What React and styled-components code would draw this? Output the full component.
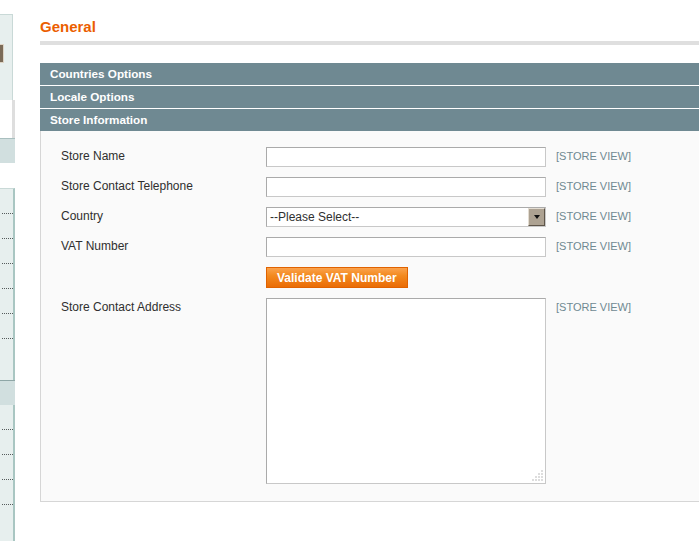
import React from 'react'
import styled, { createGlobalStyle } from 'styled-components'

const GlobalStyle = createGlobalStyle`
body {
    margin: 0;
    background: #ffffff;
    overflow: hidden;
    font-family: "Liberation Sans", Arial, sans-serif;
}
`

const Page = styled.div`
display: flex;
min-height: 541px;
`

const Sidebar = styled.div`
width: 15px;
flex-shrink: 0;
display: flex;
flex-direction: column;
`
const SideSpace = styled.div`
height: ${props => props.h}px;
`
const SideBox = styled.div`
width: 13px;
height: 86px;
box-sizing: border-box;
padding-top: 29px;
background: #e7efee;
border-top: 1px solid #c9d9d7;
border-right: 1px solid #c9d9d7;
`
const SideButton = styled.div`
width: 3px;
height: 17px;
background: #7b6b58;
border: 1px solid #ddd4c6;
border-left: none;
`
const SideWhite = styled.div`
height: 38px;
width: 12px;
border-right: 3px solid #dedede;
`
const SideTab = styled.div`
height: 24px;
background: #d1dfdf;
border-top: 1px solid ${props => props.dark ? '#8ea6a6' : '#a9bfbf'};
`
const SideMenu = styled.div`
flex: ${props => props.grow ? 1 : 'none'};
height: ${props => props.grow ? 'auto' : `${props.h}px`};
background: #e7efee;
border-top: ${props => props.top ? '1px solid #c9d9d7' : 'none'};
border-right: 2px solid #a9c6c2;
box-sizing: border-box;
`
const SideItem = styled.div`
height: 25px;
box-sizing: border-box;
margin-left: 2px;
border-bottom: 1px dotted #555b5b;
`

const Main = styled.div`
flex: 1;
margin-left: 25px;
margin-right: -20px;
padding-top: 18px;
`
const Heading = styled.h3`
margin: 0;
font-size: 15px;
line-height: 18px;
font-weight: bold;
color: #eb5e00;
`
const HeadRule = styled.div`
height: 4px;
margin-top: 5px;
background: #dfdfdf;
`
const Sections = styled.div`
margin-top: 18px;
display: flex;
flex-direction: column;
gap: 1px;
`
const SectionHead = styled.div`
height: 22px;
line-height: 22px;
padding-left: 10px;
background: #6f8992;
color: #ffffff;
font-size: 11.7px;
font-weight: bold;
`
const Panel = styled.div`
background: #fafafa;
border: 1px solid #d6d6d6;
border-top: none;
padding: 16px 20px 17px 20px;
display: flex;
flex-direction: column;
gap: 10px;
`
const Row = styled.div`
display: grid;
grid-template-columns: 195px 280px auto;
column-gap: 10px;
align-items: start;
`
const Label = styled.div`
font-size: 12px;
line-height: 18px;
color: #2f2f2f;
`
const Scope = styled.div`
font-size: 11px;
line-height: 18px;
color: #6f8992;
`
const Input = styled.input`
box-sizing: border-box;
width: 280px;
height: 20px;
margin: 0;
padding: 0 3px;
background: #ffffff;
border: 1px solid;
border-color: #aaaaaa #c8c8c8 #c8c8c8 #aaaaaa;
font: 12px "Liberation Sans", Arial, sans-serif;
`
const Select = styled.div`
box-sizing: border-box;
width: 280px;
height: 20px;
display: flex;
align-items: center;
justify-content: space-between;
padding-left: 3px;
background: #ffffff;
border: 1px solid;
border-color: #aaaaaa #c8c8c8 #c8c8c8 #aaaaaa;
font-size: 12px;
color: #2f2f2f;
`
const SelectArrow = styled.div`
box-sizing: border-box;
width: 17px;
height: 18px;
display: flex;
align-items: center;
justify-content: center;
background: #ada292;
border: 1px solid;
border-color: #e4ddd2 #5e5549 #5e5549 #e4ddd2;
`
const Triangle = styled.div`
width: 0;
height: 0;
border-left: 3px solid transparent;
border-right: 3px solid transparent;
border-top: 4px solid #111111;
`
const Button = styled.button`
grid-column: 2;
justify-self: start;
height: 21px;
margin: 0;
padding: 0 10px;
border: 1px solid #e06200;
background: linear-gradient(to bottom, #fba24c 0%, #f38a1f 40%, #ea6c06 100%);
color: #ffffff;
font: bold 12px "Liberation Sans", Arial, sans-serif;
`
const AreaWrap = styled.div`
position: relative;
width: 280px;
height: 186px;
`
const TextArea = styled.textarea`
box-sizing: border-box;
width: 280px;
height: 186px;
margin: 0;
display: block;
resize: none;
background: #ffffff;
border: 1px solid;
border-color: #aaaaaa #c8c8c8 #c8c8c8 #aaaaaa;
`
const Grip = styled.svg`
position: absolute;
right: 3px;
bottom: 3px;
`

const fields = [
    { label: 'Store Name' },
    { label: 'Store Contact Telephone' },
    { label: 'Country', select: true },
    { label: 'VAT Number' },
]

const gripDots = [[10, 1], [10, 4], [7, 4], [10, 7], [7, 7], [4, 7], [10, 10], [7, 10], [4, 10], [1, 10]]

const App = () => {
    return (
        <>
            <GlobalStyle />
            <Page>
                <Sidebar>
                    <SideSpace h={14} />
                    <SideBox>
                        <SideButton />
                    </SideBox>
                    <SideWhite />
                    <SideTab />
                    <SideSpace h={25} />
                    <SideMenu top h={192}>
                        {[0, 1, 2, 3, 4, 5].map(i => <SideItem key={i} />)}
                    </SideMenu>
                    <SideTab dark />
                    <SideMenu grow>
                        {[0, 1, 2, 3].map(i => <SideItem key={i} />)}
                    </SideMenu>
                </Sidebar>
                <Main>
                    <Heading>General</Heading>
                    <HeadRule />
                    <Sections>
                        <SectionHead>Countries Options</SectionHead>
                        <SectionHead>Locale Options</SectionHead>
                        <SectionHead>Store Information</SectionHead>
                    </Sections>
                    <Panel>
                        {fields.map(f => (
                            <Row key={f.label}>
                                <Label>{f.label}</Label>
                                {f.select ? (
                                    <Select>
                                        <span>--Please Select--</span>
                                        <SelectArrow><Triangle /></SelectArrow>
                                    </Select>
                                ) : (
                                    <Input type='text' />
                                )}
                                <Scope>[STORE VIEW]</Scope>
                            </Row>
                        ))}
                        <Row>
                            <Button type='button'>Validate VAT Number</Button>
                        </Row>
                        <Row>
                            <Label>Store Contact Address</Label>
                            <AreaWrap>
                                <TextArea />
                                <Grip width='11' height='11' viewBox='0 0 11 11'>
                                    {gripDots.map(([x, y], i) => (
                                        <rect key={i} x={x - 0.5} y={y - 0.5} width='1' height='1' fill='#777777' />
                                    ))}
                                </Grip>
                            </AreaWrap>
                            <Scope>[STORE VIEW]</Scope>
                        </Row>
                    </Panel>
                </Main>
            </Page>
        </>
    )
}

export default App
